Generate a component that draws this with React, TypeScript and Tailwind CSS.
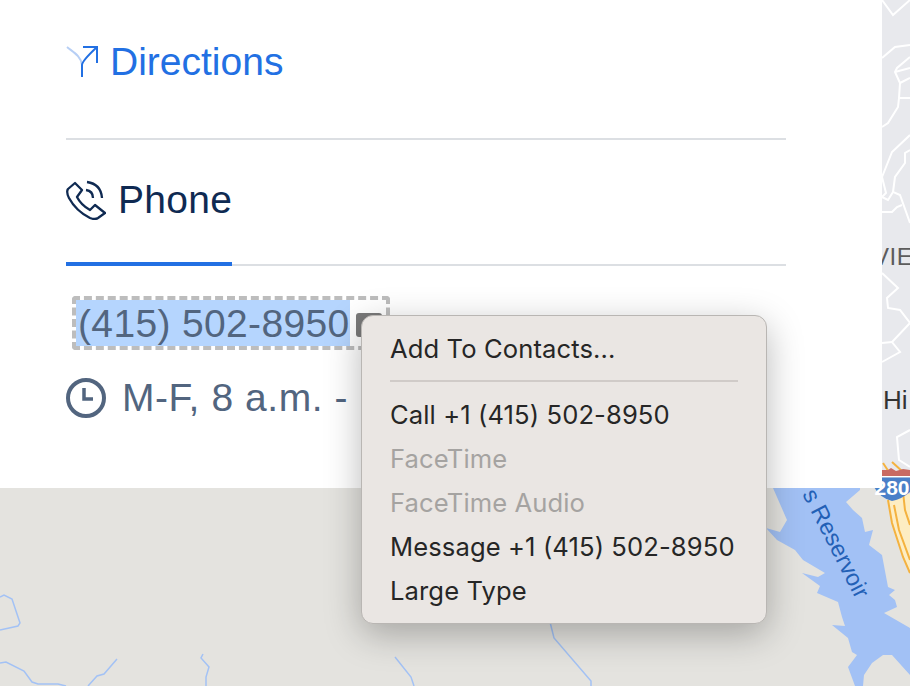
const riverLines = [
  "0,597 4,595 12,599 20,623 18,626 0,630",
  "0,663 6,662 24,671 32,682 38,684 58,684 66,686",
  "88,686 97,676 104,674 117,659",
  "203,654 201,658 209,667 206,677 206,686",
  "550,622 554,638 591,681 591,686",
  "395,657 411,677 414,686",
];

const streetLines = [
  "882,0 893,15 910,0",
  "882,58 895,47 910,45",
  "910,57 897,68 895,72 900,83 899,98 898,107 888,123 882,127",
  "895,72 910,68",
  "900,83 910,78",
  "899,98 910,98",
  "910,135 892,152 882,177",
  "910,150 905,153 905,163 895,177 893,192 900,195 910,223",
  "882,177 886,193 882,197",
  "893,192 888,200 882,197",
  "882,212 892,212 897,207 902,205",
  "882,273 898,288 887,298 888,308 900,310 910,323 892,342 900,352 882,362",
  "882,343 892,342",
  "910,430 897,437 899,460 910,467",
];

const reservoir =
  "773,488 787,520 780,532 766,528 777,540 795,550 803,560 825,573 818,577 802,573 820,586 817,593 838,602 842,617 845,626 832,625 848,638 852,652 857,655 848,667 855,686 863,686 864,675 872,663 883,655 892,655 910,675 910,628 884,613 897,607 895,600 889,595 895,590 888,587 882,555 869,545 873,530 865,532 862,518 853,510 846,502 860,490 860,480 773,480";

function MapBackground() {
  return (
    <svg className="absolute inset-0" width="910" height="686" viewBox="0 0 910 686">
      <rect width="910" height="686" fill="#e4e3df" />
      <rect x="860" width="50" height="474" fill="#e8e9ed" />
      {streetLines.map((points) => (
        <polyline key={points} points={points} fill="none" stroke="#ffffff" strokeWidth="2" />
      ))}
      {riverLines.map((points) => (
        <polyline key={points} points={points} fill="none" stroke="#a3c2f5" strokeWidth="1.5" />
      ))}
      <polygon points={reservoir} fill="#a2c1f5" />
      <polygon points="886,494 892,523 903,557 910,573 910,494" fill="#fdedc2" />
      <g fill="none" stroke="#f4b23f" strokeWidth="2">
        <polyline points="888,500 892,523 903,557 910,573" />
        <polyline points="894,505 899,530 910,560" />
        <polyline points="903,492 905,510 910,525" />
        <polyline points="883,463 889,472" />
        <polyline points="892,462 903,472" />
      </g>
      <path d="M882 470 L888 470 L891 468 L896 471 L903 469 L910 470 V476 H882 Z" fill="#c96a63" />
      <rect x="882" y="476" width="28" height="1.5" fill="#ffffff" />
      <path d="M874 477.5 H910 V492 Q902 499 892 501 Q880 498 874 487 Z" fill="#4a7fc8" />
      <text x="892" y="495" textAnchor="middle" fontFamily="Liberation Sans, sans-serif" fontSize="21" fontWeight="700" fill="#ffffff">
        280
      </text>
      <text
        transform="translate(802 494) rotate(63)"
        fontFamily="Liberation Sans, sans-serif"
        fontSize="23.5"
        fill="#2260b6"
      >
        s Reservoir
      </text>
      <text x="873" y="265" fontFamily="Liberation Sans, sans-serif" fontSize="24" letterSpacing="0.5" fill="#5c5c5c">
        VIE
      </text>
      <text x="883" y="409" fontFamily="Liberation Sans, sans-serif" fontSize="26" fill="#333333">
        Hi
      </text>
    </svg>
  );
}

function DirectionsIcon() {
  return (
    <svg width="32" height="32" viewBox="0 0 32 32" fill="none" strokeWidth="2">
      <path d="M1 1 C7 6 15 10 16 19" stroke="#b7cff5" />
      <path d="M16 31 V19 Q16 15 31 1 M17 1 H31 V17" stroke="#2270e3" />
    </svg>
  );
}

function PhoneIcon() {
  return (
    <svg className="shrink-0" width="40" height="40" viewBox="0 0 40 40" fill="none" stroke="#0f2a52" strokeWidth="2.3" strokeLinejoin="round">
      <path d="M9 3 L2 9 Q0 12 3 18 Q10 31 24 38 Q29 40 32 38 L39 33 L29 25 L24 30 Q15 25 11 17 L16 10 Z" />
      <path d="M21 2 Q35 4 36 18" />
      <path d="M20 10 Q27 11 27 18" />
    </svg>
  );
}

function ClockIcon() {
  return (
    <svg width="40" height="40" viewBox="0 0 40 40" fill="none" stroke="#52657f" strokeWidth="4">
      <circle cx="20" cy="20" r="18" />
      <path d="M18 10 V21 H27" strokeWidth="3.5" />
    </svg>
  );
}

const menuItems = [
  { label: "Call +1 (415) 502-8950", disabled: false },
  { label: "FaceTime", disabled: true },
  { label: "FaceTime Audio", disabled: true },
  { label: "Message +1 (415) 502-8950", disabled: false },
  { label: "Large Type", disabled: false },
];

function ContextMenu() {
  return (
    <div className="absolute left-[361px] top-[315px] z-10 w-[406px] rounded-[12px] border border-[#b9b6b3] bg-[#eae6e3] px-[28px] pt-[11px] pb-[10px] font-['Inter',sans-serif] text-[25.6px] tracking-[0.1px] text-[#262626] shadow-[0_10px_36px_rgba(0,0,0,0.28)]">
      <div className="flex h-[44px] items-center whitespace-nowrap">Add To Contacts...</div>
      <div className="mt-[9px] mb-[11px] h-[2px] w-[348px] bg-[#d0cbc8]" />
      {menuItems.map((item) => (
        <div
          key={item.label}
          className={
            item.disabled
              ? "flex h-[44px] items-center whitespace-nowrap text-[#a5a3a1]"
              : "flex h-[44px] items-center whitespace-nowrap"
          }
        >
          {item.label}
        </div>
      ))}
    </div>
  );
}

export default function App() {
  return (
    <div className="relative h-[686px] w-[910px] overflow-hidden font-['Liberation_Sans',sans-serif]">
      <MapBackground />
      <div className="relative h-[488px] w-[882px] bg-white pl-[66px]">
        <div className="w-[720px]">
          <div className="h-[138px] pt-[40px]">
            <a className="flex h-[44px] items-center gap-[12px] text-[39px] text-[#2270e3]">
              <DirectionsIcon />
              Directions
            </a>
          </div>
          <div className="h-[2px] bg-[#dcdfe3]" />

          <div className="flex h-[126px] items-end border-b-2 border-[#dcdfe3]">
            <div className="mb-[-2px] flex h-[86px] w-[166px] items-start gap-[12px] border-b-4 border-[#2270e3] text-[39px] leading-[40px] tracking-[0.3px] text-[#0f2a52]">
              <PhoneIcon />
              <span>Phone</span>
            </div>
          </div>

          <div className="mt-[30px] ml-[6px] inline-flex h-[54px] w-[318px] items-center rounded-[4px] border-4 border-dashed border-[#bdbdbd] text-[39px] tracking-[0.35px] text-[#52657f]">
            <span className="h-[46px] whitespace-nowrap bg-[#b5d5fe] pl-[2px] leading-[48px]">(415) 502-8950</span>
            <span className="ml-[6px] mt-[4px] h-[24px] w-[26px] rounded-[3px] bg-[#7a7a7a]" />
          </div>

          <div className="mt-[19px] flex items-center gap-[16px] whitespace-nowrap text-[39px] tracking-[0.55px] text-[#52657f]">
            <ClockIcon />
            M-F, 8 a.m. -
          </div>
        </div>
      </div>
      <ContextMenu />
    </div>
  );
}
